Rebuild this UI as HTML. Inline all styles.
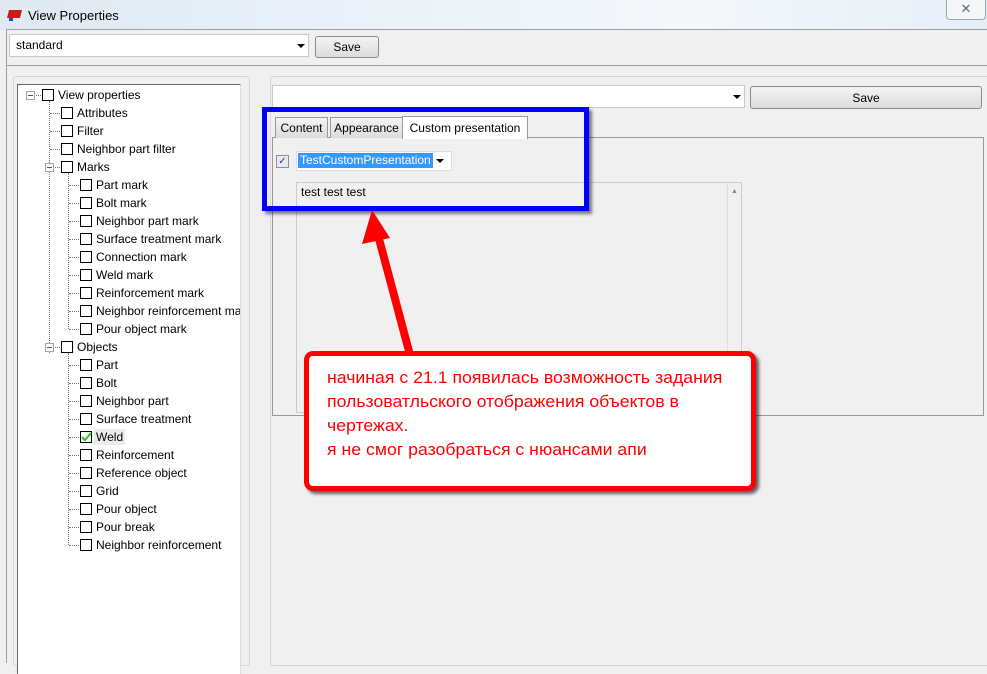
<!DOCTYPE html>
<html><head><meta charset="utf-8"><style>
*{margin:0;padding:0;box-sizing:border-box}
body{width:987px;height:663px;overflow:hidden;background:#f0f0f0;font-family:"Liberation Sans","DejaVu Sans",sans-serif;font-size:12px;color:#000;position:relative}
.a{position:absolute}
.title{left:0;top:0;width:987px;height:30px;background:linear-gradient(90deg,#dfe9f3 0%,#eef4fa 50%,#f4f8fb 70%,#e6eef6 100%)}
.btn{border:1px solid #8a8a8a;border-radius:3px;background:linear-gradient(#f4f4f4,#dcdcdc);text-align:center}
.combo{background:#fff;border:1px solid #c8c8c8}
.arrow{width:0;height:0;border-left:4px solid transparent;border-right:4px solid transparent;border-top:4px solid #000}
.cb{width:12px;height:12px;border:1.5px solid #000;background:#fff}
.row{position:absolute;height:16px;line-height:16px;white-space:nowrap}
.exp{width:9px;height:9px;border:1px solid #9aa7b6;background:#fff}
.exp:after{content:"";position:absolute;left:1px;top:3px;width:5px;height:1px;background:#3a54a0}
.dv{border-left:1px dotted #777}
.dh{border-top:1px dotted #777;height:0}
.tab{top:117px;height:21px;border:1px solid #999;border-bottom:none;background:linear-gradient(#f4f4f4,#dcdcdc);line-height:20px;text-align:center}
.note span{display:inline-block;transform:scaleX(1.04);transform-origin:0 0;white-space:nowrap}
</style></head><body>
<div class="a title"></div>
<svg class="a" style="left:7px;top:9px" width="16" height="12"><path d="M2 1 L15 1 L13 9 L0 9 Z" fill="#d01818"/><rect x="2" y="9" width="4" height="3" fill="#2050c0"/></svg>
<div class="a" style="left:28px;top:8px;font-size:13px">View Properties</div>
<div class="a" style="left:946px;top:0;width:40px;height:20px;border:1px solid #9aa;border-top:none;border-radius:0 0 4px 4px;background:#f4f6f8;text-align:center;font-size:13px;color:#667;line-height:18px">✕</div>
<div class="a" style="left:6px;top:29px;width:981px;height:634px;border-left:1px solid #9aa0a6;border-top:1px solid #9aa0a6"></div>

<div class="a combo" style="left:9px;top:34px;width:300px;height:23px;padding:3px 6px">standard</div>
<div class="a arrow" style="left:297px;top:44px"></div>
<div class="a btn" style="left:315px;top:36px;width:64px;height:22px;line-height:20px">Save</div>
<div class="a" style="left:7px;top:65px;width:980px;height:1px;background:#a0a0a0"></div>

<div class="a" style="left:13px;top:76px;width:237px;height:590px;border:1px solid #d6d6d6;border-radius:3px"></div>
<div class="a" style="left:17px;top:84px;width:224px;height:590px;background:#fff;border-left:1px solid #666;border-top:1px solid #666;border-right:1px solid #ddd"></div>

<div class="a" style="left:270px;top:76px;width:720px;height:590px;border:1px solid #d6d6d6;border-radius:3px"></div>
<div class="a combo" style="left:272px;top:85px;width:473px;height:23px"></div>
<div class="a arrow" style="left:733px;top:95px"></div>
<div class="a btn" style="left:750px;top:86px;width:232px;height:23px;line-height:22px">Save</div>

<div class="a" style="left:272px;top:137px;width:712px;height:279px;border:1px solid #999;border-top:1px solid #999"></div>
<div class="a tab" style="left:275px;width:53px">Content</div>
<div class="a tab" style="left:330px;width:73px">Appearance</div>
<div class="a" style="left:402px;top:116px;width:126px;height:23px;border:1px solid #999;border-bottom:none;background:#fff;line-height:22px;text-align:center">Custom presentation</div>
<div class="a" style="left:276px;top:155px;width:13px;height:13px;border:1px solid #8e8f8f;background:#e6eaf2;font-size:10px;line-height:11px;text-align:center;color:#2a3b8a">✓</div>
<div class="a combo" style="left:296px;top:151px;width:156px;height:20px;border-color:#ddd"></div>
<div class="a" style="left:298px;top:153px;background:#3399ff;color:#fff;padding:0 2px;height:15px;line-height:15px">TestCustomPresentation</div>
<div class="a arrow" style="left:436px;top:159px"></div>
<div class="a" style="left:296px;top:182px;width:446px;height:231px;border:1px solid #ccc;background:#f0f0f0"></div>
<div class="a" style="left:727px;top:183px;width:14px;height:229px;border-left:1px solid #ddd;background:#f0f0f0;font-size:7px;color:#888;text-align:center;padding-top:5px">▲</div>
<div class="a" style="left:301px;top:185px">test test test</div>

<!-- tree -->
<div class="a dv" style="left:49px;top:101px;height:252px"></div>
<div class="a dv" style="left:68px;top:173px;height:156px"></div>
<div class="a dv" style="left:68px;top:353px;height:192px"></div>
<div class="a dh" style="left:36px;top:95px;width:5px"></div>
<div class="a exp" style="left:26px;top:91px"></div>
<div class="a cb" style="left:42px;top:89px"></div><div class="row" style="left:58px;top:87px">View properties</div>

<div class="a dh" style="left:50px;top:113px;width:10px"></div><div class="a cb" style="left:61px;top:107px"></div><div class="row" style="left:77px;top:105px">Attributes</div>
<div class="a dh" style="left:50px;top:131px;width:10px"></div><div class="a cb" style="left:61px;top:125px"></div><div class="row" style="left:77px;top:123px">Filter</div>
<div class="a dh" style="left:50px;top:149px;width:10px"></div><div class="a cb" style="left:61px;top:143px"></div><div class="row" style="left:77px;top:141px">Neighbor part filter</div>
<div class="a exp" style="left:45px;top:163px"></div><div class="a dh" style="left:55px;top:167px;width:5px"></div><div class="a cb" style="left:61px;top:161px"></div><div class="row" style="left:77px;top:159px">Marks</div>

<div class="a dh" style="left:69px;top:185px;width:10px"></div><div class="a cb" style="left:80px;top:179px"></div><div class="row" style="left:96px;top:177px">Part mark</div>
<div class="a dh" style="left:69px;top:203px;width:10px"></div><div class="a cb" style="left:80px;top:197px"></div><div class="row" style="left:96px;top:195px">Bolt mark</div>
<div class="a dh" style="left:69px;top:221px;width:10px"></div><div class="a cb" style="left:80px;top:215px"></div><div class="row" style="left:96px;top:213px">Neighbor part mark</div>
<div class="a dh" style="left:69px;top:239px;width:10px"></div><div class="a cb" style="left:80px;top:233px"></div><div class="row" style="left:96px;top:231px">Surface treatment mark</div>
<div class="a dh" style="left:69px;top:257px;width:10px"></div><div class="a cb" style="left:80px;top:251px"></div><div class="row" style="left:96px;top:249px">Connection mark</div>
<div class="a dh" style="left:69px;top:275px;width:10px"></div><div class="a cb" style="left:80px;top:269px"></div><div class="row" style="left:96px;top:267px">Weld mark</div>
<div class="a dh" style="left:69px;top:293px;width:10px"></div><div class="a cb" style="left:80px;top:287px"></div><div class="row" style="left:96px;top:285px">Reinforcement mark</div>
<div class="a dh" style="left:69px;top:311px;width:10px"></div><div class="a cb" style="left:80px;top:305px"></div><div class="row" style="left:96px;top:303px;width:144px;overflow:hidden">Neighbor reinforcement mark</div>
<div class="a dh" style="left:69px;top:329px;width:10px"></div><div class="a cb" style="left:80px;top:323px"></div><div class="row" style="left:96px;top:321px">Pour object mark</div>

<div class="a exp" style="left:45px;top:343px"></div><div class="a dh" style="left:55px;top:347px;width:5px"></div><div class="a cb" style="left:61px;top:341px"></div><div class="row" style="left:77px;top:339px">Objects</div>
<div class="a dh" style="left:69px;top:365px;width:10px"></div><div class="a cb" style="left:80px;top:359px"></div><div class="row" style="left:96px;top:357px">Part</div>
<div class="a dh" style="left:69px;top:383px;width:10px"></div><div class="a cb" style="left:80px;top:377px"></div><div class="row" style="left:96px;top:375px">Bolt</div>
<div class="a dh" style="left:69px;top:401px;width:10px"></div><div class="a cb" style="left:80px;top:395px"></div><div class="row" style="left:96px;top:393px">Neighbor part</div>
<div class="a dh" style="left:69px;top:419px;width:10px"></div><div class="a cb" style="left:80px;top:413px"></div><div class="row" style="left:96px;top:411px">Surface treatment</div>
<div class="a dh" style="left:69px;top:437px;width:10px"></div><div class="a cb" style="left:80px;top:431px"></div><svg class="a" style="left:81px;top:432px" width="11" height="11"><path d="M1 5 L4 8 L10 1" stroke="#22cc22" stroke-width="2" fill="none"/></svg><div class="row" style="left:94px;top:429px;background:#ececec;padding:0 2px">Weld</div>
<div class="a dh" style="left:69px;top:455px;width:10px"></div><div class="a cb" style="left:80px;top:449px"></div><div class="row" style="left:96px;top:447px">Reinforcement</div>
<div class="a dh" style="left:69px;top:473px;width:10px"></div><div class="a cb" style="left:80px;top:467px"></div><div class="row" style="left:96px;top:465px">Reference object</div>
<div class="a dh" style="left:69px;top:491px;width:10px"></div><div class="a cb" style="left:80px;top:485px"></div><div class="row" style="left:96px;top:483px">Grid</div>
<div class="a dh" style="left:69px;top:509px;width:10px"></div><div class="a cb" style="left:80px;top:503px"></div><div class="row" style="left:96px;top:501px">Pour object</div>
<div class="a dh" style="left:69px;top:527px;width:10px"></div><div class="a cb" style="left:80px;top:521px"></div><div class="row" style="left:96px;top:519px">Pour break</div>
<div class="a dh" style="left:69px;top:545px;width:10px"></div><div class="a cb" style="left:80px;top:539px"></div><div class="row" style="left:96px;top:537px">Neighbor reinforcement</div>

<!-- annotations -->
<div class="a" style="left:262px;top:107px;width:327px;height:104px;border:5px solid #0000ff;box-shadow:3px 3px 3px rgba(0,0,0,.5)"></div>
<svg class="a" style="left:340px;top:200px" width="90" height="160"><path d="M70 155 L38 35" stroke="#ff0000" stroke-width="8" fill="none" stroke-linecap="round"/><path d="M32 10 L50 38 L22 44 Z" fill="#ff0000"/></svg>
<div class="a note" style="left:304px;top:351px;width:452px;height:140px;border:5px solid #ff0000;border-radius:9px;background:#fff;box-shadow:3px 3px 3px rgba(0,0,0,.6);color:#ff0000;font-size:17px;line-height:24px;padding:10px 0 0 18px"><span>начиная с 21.1 появилась возможность задания</span><br><span>пользоватльского отображения объектов в</span><br><span>чертежах.</span><br><span>я не смог разобраться с нюансами апи</span></div>
</body></html>
